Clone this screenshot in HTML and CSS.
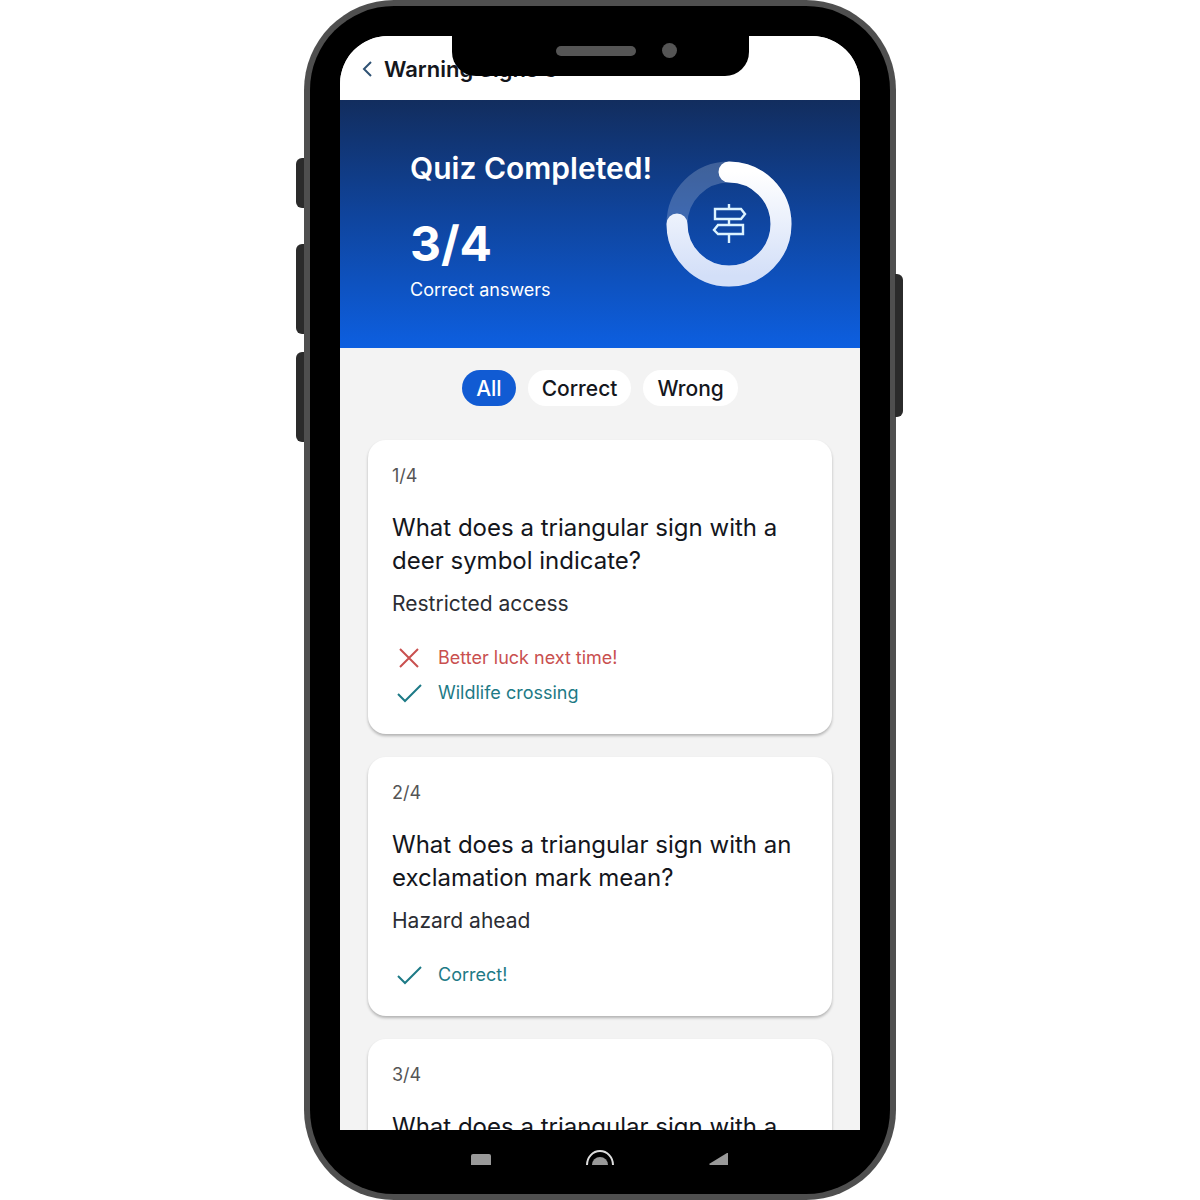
FILE: index.html
```html
<!DOCTYPE html>
<html lang="en">
<head>
<meta charset="utf-8">
<meta name="viewport" content="width=device-width, initial-scale=1">
<title>Quiz results</title>
<link rel="stylesheet" href="styles.css">
</head>
<body>
<div class="phone">
  <span class="key key-mute"></span>
  <span class="key key-up"></span>
  <span class="key key-down"></span>
  <span class="key key-power"></span>
  <div class="notch"><span class="speaker"></span><span class="camera"></span></div>
  <div class="bezel">
    <div class="screen">
      <header class="topbar">
        <button class="back" type="button" aria-label="Back">
          <svg width="12" height="18" viewBox="0 0 12 18" fill="none" stroke="#2f5274" stroke-width="2"><path d="M11 2 4 9l7 7"/></svg>
        </button>
        <h1 class="title">Warning Signs 3</h1>
      </header>
      <section class="summary">
        <div class="score">
          <h2 class="done">Quiz Completed!</h2>
          <p class="points">3/4</p>
          <p class="caption">Correct answers</p>
        </div>
        <svg class="ring" width="126" height="126" viewBox="0 0 126 126" fill="none">
          <defs><linearGradient id="arc" x1="0" y1="0" x2="0" y2="1"><stop offset="0" stop-color="#fff"/><stop offset="1" stop-color="#d3dff8"/></linearGradient></defs>
          <circle cx="63" cy="63" r="52" stroke="#fff" stroke-opacity=".2" stroke-width="21"/>
          <path d="M63 11a52 52 0 1 1-52 52" stroke="url(#arc)" stroke-width="21" stroke-linecap="round"/>
          <g stroke="#dcf3ff" stroke-width="2.4"><path d="M63 43v5M63 58v6M63 73v9"/><path d="M49 48h26l4 5-4 5H49z"/><path d="M77 64H52l-4 5 4 4h25z"/></g>
        </svg>
      </section>
      <nav class="filters">
        <button class="chip chip-on" type="button">All</button>
        <button class="chip" type="button">Correct</button>
        <button class="chip" type="button">Wrong</button>
      </nav>
      <main class="list">
        <article class="card">
          <p class="count">1/4</p>
          <h3 class="question">What does a triangular sign with a deer symbol indicate?</h3>
          <p class="answer">Restricted access</p>
          <p class="result bad"><svg class="mark" width="28" height="24" viewBox="0 0 28 24"><path d="m5 3 18 18M23 3 5 21"/></svg>Better luck next time!</p>
          <p class="result good"><svg class="mark" width="28" height="24" viewBox="0 0 28 24"><path d="m3 13 7 7L26 4"/></svg>Wildlife crossing</p>
        </article>
        <article class="card">
          <p class="count">2/4</p>
          <h3 class="question">What does a triangular sign with an exclamation mark mean?</h3>
          <p class="answer">Hazard ahead</p>
          <p class="result good"><svg class="mark" width="28" height="24" viewBox="0 0 28 24"><path d="m3 13 7 7L26 4"/></svg>Correct!</p>
        </article>
        <article class="card">
          <p class="count">3/4</p>
          <h3 class="question">What does a triangular sign with a</h3>
        </article>
      </main>
    </div>
    <footer class="navbar">
      <svg width="20" height="16" viewBox="0 0 20 16"><path d="M0 15V6q0-2 2-2h16q2 0 2 2v9z" fill="#999"/></svg>
      <svg width="28" height="16" viewBox="0 0 28 16"><path d="M1 15a13 14 0 0 1 26 0" fill="none" stroke="#ddd" stroke-width="2"/><path d="M6 15a8 8 0 0 1 16 0z" fill="#999"/></svg>
      <svg width="20" height="16" viewBox="0 0 20 16"><path d="M0 14 18 3h1v12H1z" fill="#999"/></svg>
    </footer>
  </div>
</div>
</body>
</html>
```
FILE: styles.css
```css
* { box-sizing: border-box; }
body, h1, h2, h3, p { margin: 0; }
body { background: #fff; color: #14161c; font-family: Inter, "Liberation Sans", sans-serif; }
button { border: 0; padding: 0; background: none; font: inherit; color: inherit; }

.phone { position: relative; width: 100%; max-width: 592px; height: 100vh; margin: 0 auto; padding: 6px; border-radius: 90px; background: #4f4f4f; }
.bezel { display: flex; flex-direction: column; height: 100%; padding: 30px 30px 0; border-radius: 84px; background: #000; }
.screen { flex: 1; min-height: 0; overflow: hidden; border-radius: 48px 48px 0 0; background: #f3f3f3; }

.key { position: absolute; left: -8px; width: 8px; border-radius: 6px 0 0 6px; background: #2b2b2b; }
.key-mute { top: 158px; height: 50px; }
.key-up { top: 244px; height: 90px; }
.key-down { top: 352px; height: 90px; }
.key-power { top: 274px; left: auto; right: -7px; height: 143px; border-radius: 0 6px 6px 0; }
.notch { position: absolute; top: 30px; left: 50%; width: 297px; height: 46px; margin-left: -148px; border-radius: 0 0 24px 24px; background: #000; }
.speaker { position: absolute; left: 104px; top: 16px; width: 80px; height: 10px; border-radius: 5px; background: #555; }
.camera { position: absolute; left: 210px; top: 13px; width: 15px; height: 15px; border-radius: 50%; background: #555; }

.topbar { display: flex; align-items: center; gap: 12px; height: 64px; padding: 2px 20px 0; background: #fff; }
.back { display: flex; }
.title { font-size: 22px; line-height: 28px; font-weight: 600; }

.summary { display: flex; justify-content: space-between; height: 248px; padding: 48px 68px 0 70px; color: #fff; background: linear-gradient(#122d5e, #0f459f 48%, #0d5fe0); }
.done { font-size: 30px; line-height: 40px; font-weight: 600; white-space: nowrap; }
.points { margin-top: 28px; font-size: 48px; line-height: 56px; font-weight: 700; }
.caption { margin-top: 4px; font-size: 18px; line-height: 28px; }
.ring { flex: none; margin-top: 13px; }

.filters { display: flex; justify-content: center; gap: 12px; padding: 22px 0 0; }
.chip { height: 36px; padding: 0 14px; border-radius: 18px; background: #fff; font-size: 21px; font-weight: 500; }
.chip-on { background: #115bd3; color: #fff; }

.list { display: grid; gap: 23px; padding: 34px 28px; }
.card { padding: 24px; border-radius: 18px; background: #fff; box-shadow: 0 2px 3px #0004; }
.count { font-size: 18px; line-height: 24px; color: #555; }
.question { margin-top: 23px; font-size: 24px; line-height: 33px; font-weight: 400; }
.answer { margin-top: 10px; margin-bottom: 20px; font-size: 21px; line-height: 33px; color: #2b2d33; }
.result { display: flex; align-items: center; gap: 15px; padding-left: 3px; font-size: 18px; line-height: 35px; }
.mark { fill: none; stroke: currentColor; stroke-width: 2; }
.bad { color: #c9504f; }
.good { color: #1d7a86; }

.navbar { display: flex; flex: none; justify-content: center; gap: 95px; height: 64px; padding-top: 20px; }
```
